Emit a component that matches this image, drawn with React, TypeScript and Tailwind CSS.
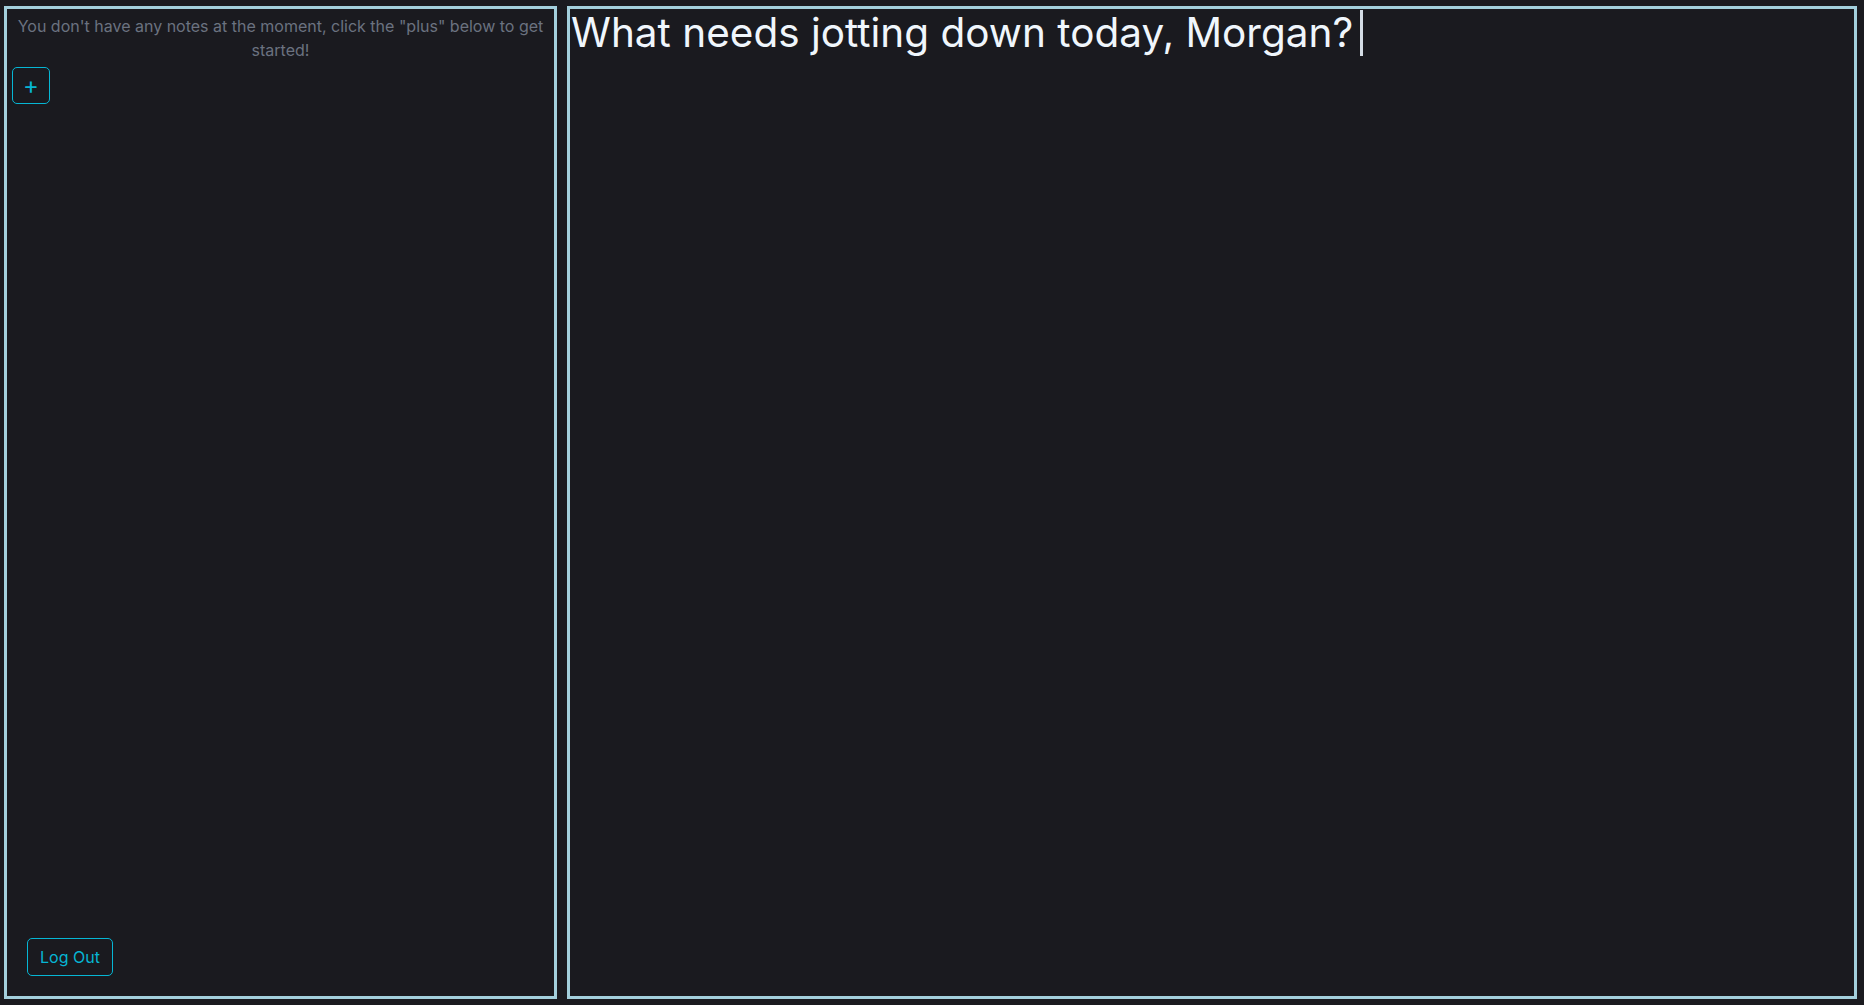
import React from "react";

export default function App() {
  return (
    <div
      className="flex h-screen w-full gap-[10px] bg-[#1a1a1f] pt-[6px] pb-[6px] pl-[4px] pr-[7px]"
      style={{ fontFamily: "Inter, 'Noto Sans', sans-serif" }}
    >
      <aside className="flex w-[553px] shrink-0 flex-col border-[3px] border-[#a3cfdc] px-[5px] pt-[5px] pb-[20px]">
        <p className="text-center text-base leading-6 text-[#6b7280]">
          You don't have any notes at the moment, click the "plus" below to get started!
        </p>
        <button className="mt-[5px] flex h-[37px] w-[38px] items-center justify-center rounded-[5px] border border-[#06b6d4] text-[24px] leading-none text-[#06b6d4]">
          +
        </button>
        <div className="flex-1" />
        <button className="ml-[15px] h-[38px] w-[86px] rounded-[5px] border border-[#06b6d4] text-base text-[#06b6d4]">
          Log Out
        </button>
      </aside>
      <main className="flex-1 border-[3px] border-[#a3cfdc] pl-[1px]">
        <h1 className="flex items-center text-[40.5px] leading-[48px] text-[#f0f6fc]">
          What needs jotting down today, Morgan?
          <span className="ml-[7px] inline-block h-[46px] w-[3px] bg-[#d5dde6]" />
        </h1>
      </main>
    </div>
  );
}
